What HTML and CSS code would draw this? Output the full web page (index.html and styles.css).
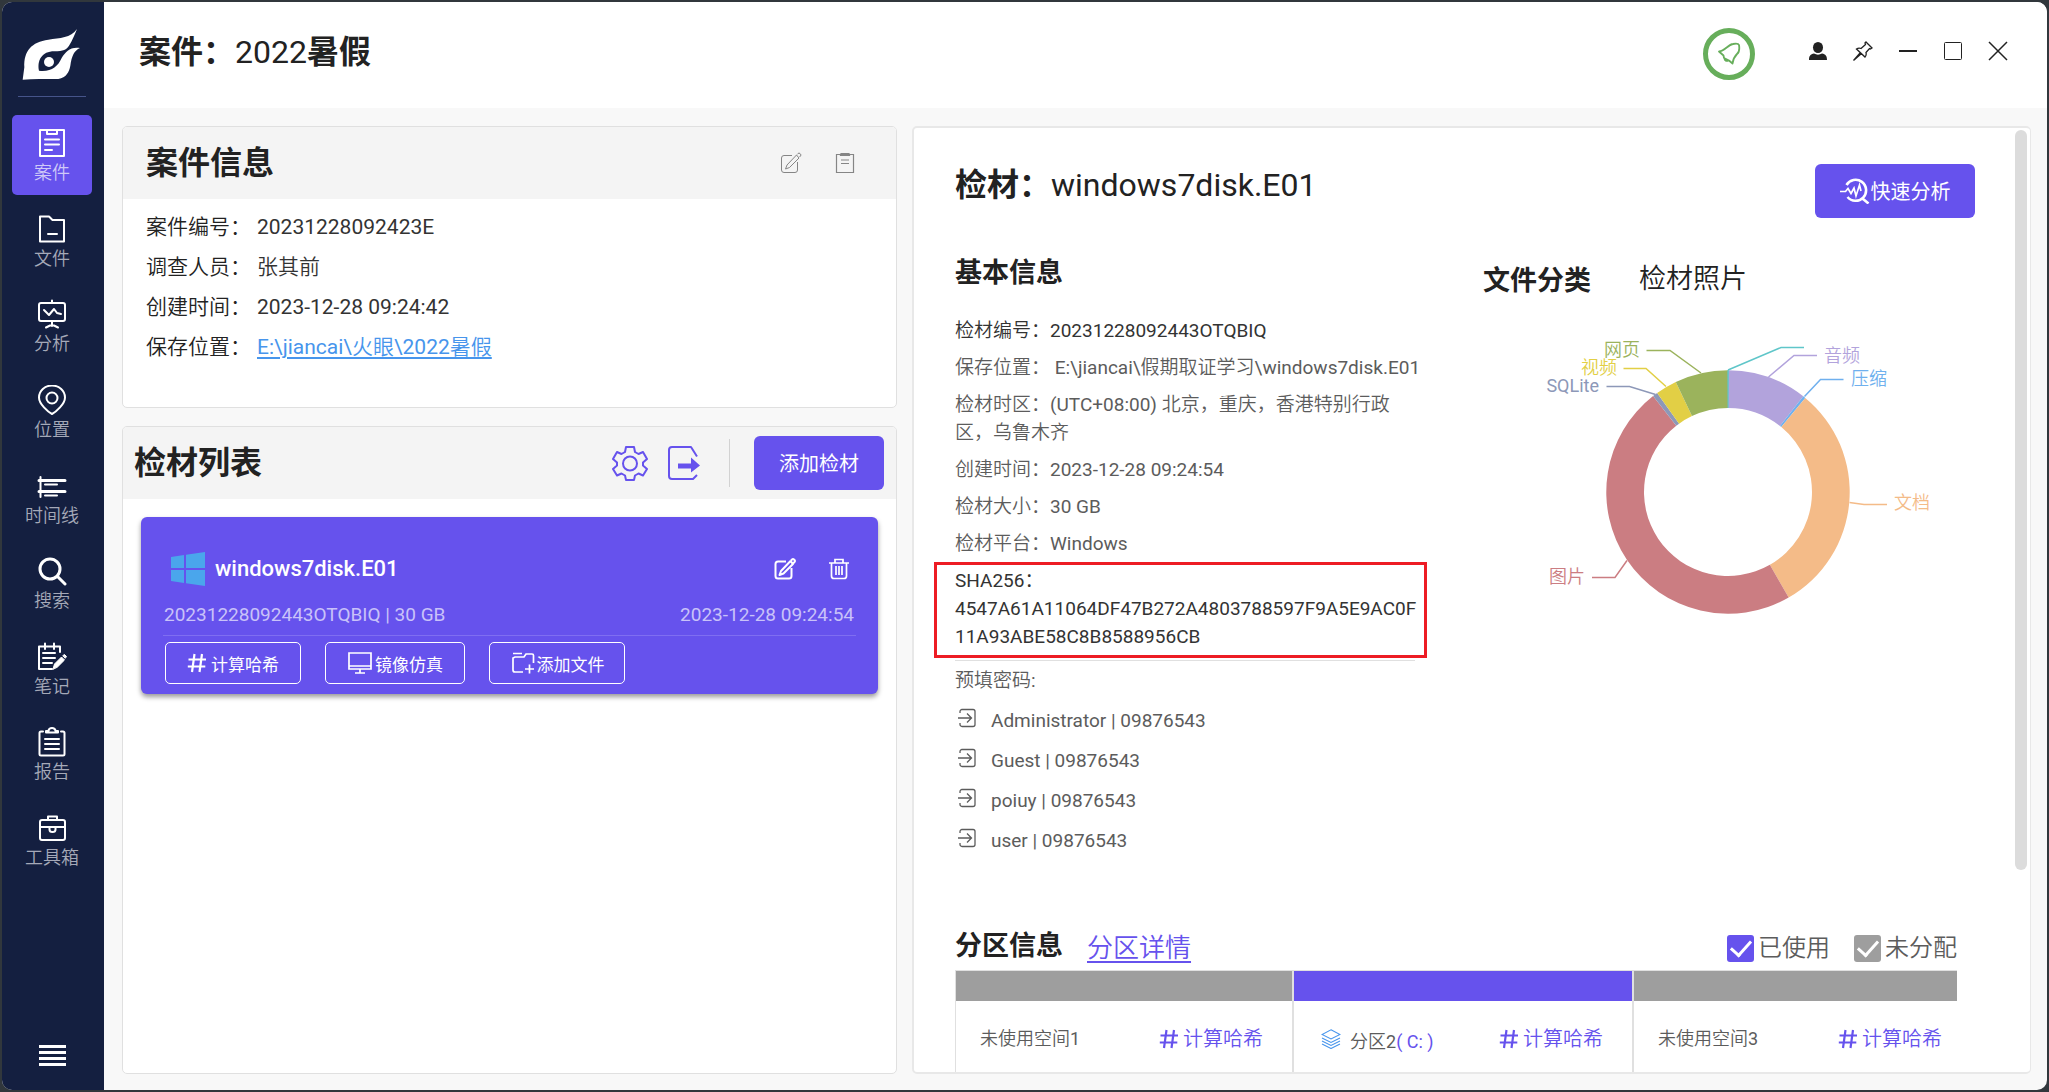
FILE: index.html
```html
<!DOCTYPE html>
<html lang="zh-CN">
<head>
<meta charset="utf-8">
<title>案件：2022暑假</title>
<link rel="stylesheet" href="styles.css">
</head>
<body>
<svg class="sprite" aria-hidden="true">
  <symbol id="i-hash" viewBox="0 0 20 20"><path d="M7.500 1 5 19M15 1l-2.500 18M1.500 6.500h17.500M.8 13.500h17.500" fill="none" stroke="currentColor" stroke-width="2.200"/></symbol>
  <symbol id="i-enter" viewBox="0 0 18 20"><path d="M2 5V3.500A2 2 0 0 1 4 1.500h11a2 2 0 0 1 2 2v13a2 2 0 0 1-2 2H4a2 2 0 0 1-2-2V15M0 10h13M9 5.500l4.500 4.500L9 14.500" fill="none" stroke="currentColor" stroke-width="1.300"/></symbol>
  <symbol id="i-edit" viewBox="0 0 22 22"><path d="M12 3.500H4A2.500 2.500 0 0 0 1.500 6v12A2.500 2.500 0 0 0 4 20.500h11a2.500 2.500 0 0 0 2.500-2.500v-8M16.500 3 7 13l-1.500 4 4-1.500L19 6zM17 2.500l1-1a1.500 1.500 0 0 1 2 0l.5.5a1.500 1.500 0 0 1 0 2l-1 1" fill="none" stroke="currentColor" stroke-linejoin="round"/></symbol>
</svg>
<div class="window">
  <aside class="sidebar">
    <svg class="logo" viewBox="71 82 180 156"><path fill="#fff" d="M236 85C217 112 185 112 150 117 100 124 76 150 78 200L73 237C110 233 150 236 180 235 204 230 212 215 216 195 220 165 228 150 245 142 215 138 203 152 190 172 178 199 158 214 122 210 116 180 130 152 168 152 195 152 205 146 212 135 222 120 230 100 236 85Z"/><circle cx="152" cy="184" r="15" fill="#fff"/></svg>
    <hr class="side-rule">
    <nav class="nav">
      <a class="nav-item active" href="#"><svg viewBox="0 0 30 30"><path d="M3 2h24v26H3zM10 2v4h10V2M8 11.500h14M8 16.500h14M8 22h7"/></svg><span>案件</span></a>
      <a class="nav-item" href="#"><svg viewBox="0 0 30 30"><path d="M3 2.500h9l3.500 3.500H27v21.500H3zM11 20h9"/></svg><span>文件</span></a>
      <a class="nav-item" href="#"><svg viewBox="0 0 30 30"><rect x="2" y="4" width="26" height="18" rx="2"/><path d="M15 1.500V4M15 22v5M9 28.500l4-2h4l4 2M7 11l5 5 5-6 3 4 4 1"/></svg><span>分析</span></a>
      <a class="nav-item" href="#"><svg viewBox="0 0 30 30"><path d="M15 29C11 27 2 19 2 12.500a13 12 0 0 1 26 0C28 19 19 27 15 29z"/><circle cx="15" cy="13" r="5.500"/></svg><span>位置</span></a>
      <a class="nav-item" href="#"><svg viewBox="0 0 30 30"><path d="M3.500 6v20M8 13.500h12M8 24.500h12"/><path d="M2 9.500h26M2 20.500h26" stroke-width="3"/></svg><span>时间线</span></a>
      <a class="nav-item" href="#"><svg viewBox="0 0 30 30"><circle cx="13" cy="13" r="10" stroke-width="3"/><path d="M20.500 20.500 28 28" stroke-width="3"/></svg><span>搜索</span></a>
      <a class="nav-item" href="#"><svg viewBox="0 0 30 30"><path d="M23 10V4.500H2V27h13M8 1.500V7M17 1.500V7M6 11h12M6 16h12M6 21h9"/><path d="m16 27 1.500-5 7-7 3 3-7 7zM26 13.500l1.500-1 2 2-1 1.500z" fill="#fff" stroke-width="1"/></svg><span>笔记</span></a>
      <a class="nav-item" href="#"><svg viewBox="0 0 30 30"><path d="M6 4.500H4a1.500 1.500 0 0 0-1.500 1.500v21A1.500 1.500 0 0 0 4 28.500h22a1.500 1.500 0 0 0 1.500-1.500V6A1.500 1.500 0 0 0 26 4.500h-2M9 5.500V4h2.500a3.500 3 0 0 1 7 0H21v1.500zM8 12h14M8 17h14M8 22h14"/></svg><span>报告</span></a>
      <a class="nav-item" href="#"><svg viewBox="0 0 30 30"><rect x="3" y="7" width="25" height="20" rx="2"/><path d="M11 7V3.500h9V7M3 14h9M19 14h9M12.500 14v2.500a3 2.500 0 0 0 6 0V14z"/></svg><span>工具箱</span></a>
    </nav>
    <button class="menu" type="button" aria-label="菜单"><i></i><i></i><i></i><i></i></button>
  </aside>

  <div class="body">
    <header class="topbar">
      <h1 class="title-xl">案件：<span class="latin">2022</span>暑假</h1>
      <button class="bell" type="button" aria-label="通知"><svg viewBox="0 0 24 24"><path d="M2 9.500C8 9 11 2.500 16 2c3-.5 5.500-.5 6 1 .5 3 .5 7-2 9-3 3-4 6-4.500 9.500L12 18.500 7 16l-.5-2.500zM7.500 16.500c0 2 2 3 4 2" fill="none" stroke="currentColor" stroke-width="1.800" stroke-linejoin="round"/></svg></button>
      <div class="win-tools">
        <button type="button" aria-label="用户"><svg viewBox="0 0 20 20"><ellipse cx="10" cy="6.500" rx="5" ry="5.500" fill="currentColor"/><path d="M1 19c0-4 1.500-6 5-6.500 2.500 1.500 5.500 1.500 8 0 3.500.5 5 2.500 5 6.500z" fill="currentColor"/></svg></button>
        <button type="button" aria-label="置顶"><svg viewBox="0 0 20 20"><path d="M13 1l6 6-1.500 1-1-.5-3.500 4c.5 2 0 3.500-1 4.500L3.500 8C5 7 6.500 7 8 7.500l4.500-4-.5-1.500zM7.500 11.500.5 19.500l8-7" fill="none" stroke="currentColor" stroke-width="1.300"/></svg></button>
        <button type="button" aria-label="最小化"><svg viewBox="0 0 20 20"><path d="M1 10h18" stroke="currentColor" stroke-width="2"/></svg></button>
        <button type="button" aria-label="最大化"><svg viewBox="0 0 20 20"><rect x="1.500" y="1.500" width="17" height="17" rx="1" fill="none" stroke="currentColor"/></svg></button>
        <button type="button" aria-label="关闭"><svg viewBox="0 0 20 20"><path d="M1 1l18 18M19 1 1 19" stroke="currentColor" stroke-width="1.500"/></svg></button>
      </div>
    </header>

    <main class="content">
      <div class="left">
        <section class="panel case">
          <div class="panel-head">
            <h2 class="title-xl">案件信息</h2>
            <div class="head-icons">
              <button type="button" aria-label="编辑"><svg viewBox="0 0 22 22"><use href="#i-edit"/></svg></button>
              <button type="button" aria-label="详情"><svg viewBox="0 0 22 22"><path d="M2.500 2.500h17v18h-17zM7 1.500h8l.5 2h-9zM7 8h8M7 11.500h8" fill="none" stroke="currentColor" stroke-width="1.200"/></svg></button>
            </div>
          </div>
          <dl class="case-list">
            <div><dt>案件编号：</dt><dd>20231228092423E</dd></div>
            <div><dt>调查人员：</dt><dd>张其前</dd></div>
            <div><dt>创建时间：</dt><dd>2023-12-28 09:24:42</dd></div>
            <div><dt>保存位置：</dt><dd><a href="#">E:\jiancai\火眼\2022暑假</a></dd></div>
          </dl>
        </section>

        <section class="panel evidence">
          <div class="panel-head">
            <h2 class="title-xl">检材列表</h2>
            <div class="head-actions">
              <button class="tool" type="button" aria-label="设置"><svg viewBox="0 0 36 36"><path d="M14 2h8l1 5 3.500 2 4.500-2 4 7-4 3.500v3l4 3.500-4 6.500-4.500-2-3.500 2-1 4.500h-8l-1-4.500-3.500-2-4.500 2L1 24l4-3.500v-3L1 14l4-7 4.500 2L13 7z"/><circle cx="18" cy="18.500" r="7"/></svg></button>
              <button class="tool" type="button" aria-label="导出"><svg viewBox="0 0 36 36"><path d="M31 11.500 25 2H6a3 3 0 0 0-3 3v26a3 3 0 0 0 3 3h21l4-4"/><path d="M12 18.500h13v-6l9 8-9 7v-4H12z" fill="currentColor" stroke="none"/></svg></button>
              <span class="bar"></span>
              <button class="btn" type="button">添加检材</button>
            </div>
          </div>
          <article class="disk">
            <div class="disk-top">
              <svg class="win-logo" viewBox="0 0 34 34"><path fill="#4aa6ec" d="M0 5 13 3v13H0zM15 2.700 34 0v16H15zM0 18h13v13L0 29zM15 18h19v16l-19-2.700z"/></svg>
              <h3>windows7disk.E01</h3>
              <button type="button" aria-label="编辑"><svg viewBox="0 0 22 22" class="bold"><use href="#i-edit"/></svg></button>
              <button type="button" aria-label="删除"><svg viewBox="0 0 22 22"><path d="M1 5h20M7 5V1.500h8V5M3.500 5v13a2.500 2.500 0 0 0 2.500 2.500h10a2.500 2.500 0 0 0 2.500-2.500V5M8 8v9M11 8v9M14 8v9" fill="none" stroke="currentColor" stroke-width="1.700"/></svg></button>
            </div>
            <div class="disk-meta"><span>20231228092443OTQBIQ | 30 GB</span><time>2023-12-28 09:24:54</time></div>
            <div class="disk-actions">
              <button type="button"><svg class="hash" viewBox="0 0 20 20"><use href="#i-hash"/></svg>计算哈希</button>
              <button class="wide" type="button"><svg viewBox="0 0 26 24"><path d="M2 2h22v16H2zM2 15h22M13 18v4M8 22h10" fill="none" stroke="currentColor" stroke-width="1.700"/></svg>镜像仿真</button>
              <button class="tight" type="button"><svg viewBox="0 0 26 24"><path d="M13 21H5a2 2 0 0 1-2-2V7l2-1h9l2-3h6a1.500 1.500 0 0 1 1.500 1.500V12M3 2.500h9M19.500 13.500v9M15 18h9" fill="none" stroke="currentColor" stroke-width="1.700"/></svg>添加文件</button>
            </div>
          </article>
        </section>
      </div>

      <section class="detail">
        <div class="detail-scroll">
          <div class="detail-head">
            <h2 class="title-xl">检材：<span class="latin">windows7disk.E01</span></h2>
            <button class="btn quick" type="button"><svg viewBox="0 0 30 26"><path d="M6.500 7a10.500 10.500 0 1 1 1 12M22.500 20.500l6 5" fill="none" stroke="currentColor" stroke-width="2.600"/><path d="M0 13.500h5.500l2.500-3 3 5 3-5.500 2 8 3.500-11 1.500 6" fill="none" stroke="currentColor" stroke-width="1.700"/></svg>快速分析</button>
          </div>
          <div class="detail-cols">
            <div class="basic">
              <h3 class="title-md">基本信息</h3>
              <ul class="facts">
                <li class="strong">检材编号：20231228092443OTQBIQ</li>
                <li>保存位置： E:\jiancai\假期取证学习\windows7disk.E01</li>
                <li class="wrap">检材时区：(UTC+08:00) 北京，重庆，香港特别行政区，乌鲁木齐</li>
                <li>创建时间：2023-12-28 09:24:54</li>
                <li>检材大小：30 GB</li>
                <li>检材平台：Windows</li>
                <li class="strong marked">SHA256：<br>4547A61A11064DF47B272A4803788597F9A5E9AC0F<br>11A93ABE58C8B8588956CB</li>
              </ul>
              <p class="pw-title">预填密码:</p>
              <ul class="pw-list">
                <li><svg viewBox="0 0 18 20"><use href="#i-enter"/></svg>Administrator | 09876543</li>
                <li><svg viewBox="0 0 18 20"><use href="#i-enter"/></svg>Guest | 09876543</li>
                <li><svg viewBox="0 0 18 20"><use href="#i-enter"/></svg>poiuy | 09876543</li>
                <li><svg viewBox="0 0 18 20"><use href="#i-enter"/></svg>user | 09876543</li>
              </ul>
            </div>
            <div class="charts">
              <div class="tabs"><button class="on" type="button">文件分类</button><button type="button">检材照片</button></div>
              <svg class="donut" viewBox="-245 -163 492 300">
                <g id="rings"></g>
                <g fill="none" stroke-width="1.500">
                  <path stroke="#5fc6c9" d="M0-122 53-144.500H76"/>
                  <path stroke="#b2a3dc" d="M40.500-115 66-136.500H89"/>
                  <path stroke="#6fb0ee" d="M76.500-95.500 92.500-112.500H115.500"/>
                  <path stroke="#f4bb88" d="M121.500 10.500 136 12.500H159"/>
                  <path stroke="#cb7d82" d="M-101 68.500-113 85.500H-136"/>
                  <path stroke="#8d98b8" d="M-72.500-97.500-98.500-105.500H-121.500"/>
                  <path stroke="#e2cf45" d="M-62-105.500-82-123.500H-104.500"/>
                  <path stroke="#9bb35c" d="M-27-119-58-141.500H-81.500"/>
                </g>
                <text x="96" y="-130" fill="#b2a3dc">音频</text>
                <text x="123" y="-107" fill="#6fb0ee">压缩</text>
                <text x="166" y="17" fill="#f4bb88">文档</text>
                <text x="-143" y="91" text-anchor="end" fill="#cb7d82">图片</text>
                <text x="-129" y="-100" text-anchor="end" fill="#8d98b8">SQLite</text>
                <text x="-111" y="-118" text-anchor="end" fill="#e2cf45">视频</text>
                <text x="-88" y="-136" text-anchor="end" fill="#9bb35c">网页</text>
              </svg>
            </div>
          </div>
          <div class="part-head">
            <h3 class="title-md">分区信息</h3>
            <a href="#">分区详情</a>
            <div class="legend">
              <label><input type="checkbox" checked>已使用</label>
              <label><input class="gray" type="checkbox" checked>未分配</label>
            </div>
          </div>
          <div class="parts">
            <div class="part"><div class="fill gray"></div><div class="part-row"><span>未使用空间1</span><button type="button"><svg viewBox="0 0 20 20"><use href="#i-hash"/></svg>计算哈希</button></div></div>
            <div class="part"><div class="fill"></div><div class="part-row"><svg class="layers" viewBox="0 0 20 20"><path d="M10 .8 19 5.500 10 10 1 5.500zM1 9l9 4.500L19 9M1 12l9 4.500 9-4.500M1 15l9 4.500 9-4.500" fill="none" stroke="currentColor" stroke-width="1.100"/></svg><span class="low">分区2<b>( C: )</b></span><button type="button"><svg viewBox="0 0 20 20"><use href="#i-hash"/></svg>计算哈希</button></div></div>
            <div class="part"><div class="fill gray"></div><div class="part-row last"><span>未使用空间3</span><button type="button"><svg viewBox="0 0 20 20"><use href="#i-hash"/></svg>计算哈希</button></div></div>
          </div>
        </div>
        <div class="track"><div class="thumb"></div></div>
      </section>
    </main>
  </div>
</div>
<script src="chart.js"></script>
</body>
</html>
```
FILE: chart.js
```js
// Slices of the file type ring: start angle, end angle (degrees clockwise from the top), colour.
const slices = [
  [0, 38.2, '#b2a3dc'],
  [38.2, 39.4, '#6fb0ee'],
  [39.4, 150.1, '#f4bb88'],
  [150.1, 322, '#cb7d82'],
  [322, 324.4, '#8d98b8'],
  [324.4, 334.6, '#e2cf45'],
  [334.6, 360, '#9bb35c'],
  [359.7, 360.4, '#5fc6c9']
];
const OUTER = 121.7, INNER = 84;
const at = (r, deg) => {
  const a = deg * Math.PI / 180;
  return (r * Math.sin(a)).toFixed(2) + ' ' + (-r * Math.cos(a)).toFixed(2);
};
const rings = document.getElementById('rings');
for (const [from, to, color] of slices) {
  const big = to - from > 180 ? 1 : 0;
  const p = document.createElementNS('http://www.w3.org/2000/svg', 'path');
  p.setAttribute('d', `M${at(OUTER, from)}A${OUTER} ${OUTER} 0 ${big} 1 ${at(OUTER, to)}L${at(INNER, to)}A${INNER} ${INNER} 0 ${big} 0 ${at(INNER, from)}Z`);
  p.setAttribute('fill', color);
  rings.appendChild(p);
}
```
FILE: styles.css
```css
:root {
  --accent: #6652ed;
  --ink: #222;
  --soft: #5c5c5c;
  --line: #e0e0e0;
}
* { box-sizing: border-box; margin: 0; padding: 0; }
html, body { height: 100%; }
body {
  background: #31373c;
  padding: 2px;
  font-family: Roboto, "Noto Sans CJK SC DemiLight", "Noto Sans CJK SC Light", "Noto Sans CJK SC", sans-serif;
  font-size: 18px;
  line-height: 28px;
  color: var(--ink);
}
button { font: inherit; color: inherit; background: none; border: 0; }
ul { list-style: none; }
svg { display: block; flex: none; }
.sprite { position: absolute; width: 0; height: 0; }

.window { display: flex; height: 100%; border-radius: 10px; overflow: hidden; background: #f8f8f8; }

.sidebar {
  flex: none; width: 102px; background: #141f40;
  display: flex; flex-direction: column; align-items: center; padding: 26px 2px 0 0;
}
.logo { width: 60px; height: 52px; }
.side-rule { width: 68px; border: 0; border-top: 1px solid #46548a; margin: 16px 0 18px; }
.nav { height: 765px; display: flex; flex-direction: column; justify-content: space-between; }
.nav-item {
  width: 80px; height: 80px; padding-top: 13px; border-radius: 5px;
  display: flex; flex-direction: column; align-items: center; gap: 3px;
  color: #a5a9b8; text-decoration: none; line-height: 24px;
}
.nav-item svg { width: 30px; height: 30px; fill: none; stroke: #fff; stroke-width: 2; stroke-linejoin: round; stroke-linecap: round; }
.nav-item.active { background: var(--accent); color: #cfc9f8; }
.menu { margin: auto 0 24px; width: 27px; display: grid; gap: 3px; }
.menu i { height: 3px; background: #fff; }

.body { flex: 1; min-width: 0; display: flex; flex-direction: column; }
.topbar { flex: none; height: 106px; background: #fff; padding: 26px 27px 0 35px; display: flex; align-items: flex-start; }
.title-xl { font-family: Roboto, "Noto Sans CJK SC", sans-serif; font-size: 32px; line-height: 48px; font-weight: 700; }
.title-md { font-family: Roboto, "Noto Sans CJK SC", sans-serif; font-size: 27px; line-height: 34px; font-weight: 700; }
.latin { font-weight: 400; }
.bell {
  width: 52px; height: 52px; margin: 0 40px 0 auto; border: 5px solid #67ae5b; border-radius: 50%;
  color: #67ae5b; display: grid; place-items: center;
}
.bell svg { width: 24px; height: 24px; }
.win-tools { display: flex; }
.win-tools button { width: 45px; height: 46px; display: grid; place-items: center; }
.win-tools svg { width: 20px; height: 20px; }

.content { flex: 1; min-height: 0; display: grid; grid-template-columns: 775fr 1119fr; gap: 15px; padding: 18px 16px 16px 18px; }
.left { display: flex; flex-direction: column; gap: 18px; min-width: 0; min-height: 0; }
.panel { background: #fff; border: 1px solid var(--line); border-radius: 5px; overflow: hidden; }
.panel-head { height: 72px; background: #f4f4f4; display: flex; align-items: center; justify-content: space-between; }
.case .panel-head { padding: 0 40px 0 23px; }
.evidence { flex: 1; }
.evidence .panel-head { padding: 0 12px 0 11px; }
.head-icons { display: flex; gap: 32px; color: #858585; }
.head-icons svg { width: 22px; height: 22px; }
.case-list { padding: 8px 23px 40px; font-size: 21px; line-height: 40px; }
.case-list div { display: flex; gap: 6px; }
.case-list dd { color: #333; }
.case-list a { color: #4795ec; text-decoration-thickness: 2px; text-underline-offset: 3px; }

.head-actions { display: flex; align-items: center; }
.tool { color: var(--accent); margin-right: 18px; }
.tool svg { width: 36px; height: 36px; fill: none; stroke: currentColor; stroke-width: 2; stroke-linejoin: round; }
.bar { width: 1px; height: 48px; background: #d2d2d2; margin: 0 24px 0 9px; }
.btn { height: 54px; width: 130px; border-radius: 6px; background: var(--accent); color: #fff; font-size: 20px; font-family: "Noto Sans CJK SC", sans-serif; }

.disk { margin: 18px; height: 177px; background: var(--accent); color: #fff; border-radius: 6px; box-shadow: 0 3px 5px rgba(0, 0, 0, .4); padding: 34px 22px 0; }
.disk-top { display: flex; align-items: center; height: 36px; padding: 0 6px 0 8px; }
.win-logo { width: 34px; height: 34px; margin-right: 10px; }
.disk-top h3 { font-size: 22px; font-weight: 500; margin-right: auto; }
.disk-top button { margin-left: 32px; }
.disk-top button svg { width: 22px; height: 22px; }
.bold { stroke-width: 2; }
.disk-meta { display: flex; justify-content: space-between; padding: 14px 2px 6px 1px; color: #c9c2f9; font-size: 19px; font-weight: 400; border-bottom: 1px solid #7f6ef1; }
.disk-actions { display: flex; gap: 24px; padding: 6px 2px; }
.disk-actions button {
  height: 42px; width: 136px; border: 1px solid #fff; border-radius: 5px; font: 400 17px "Noto Sans CJK SC", sans-serif;
  display: flex; align-items: center; justify-content: center; gap: 4px;
}
.disk-actions .tight { gap: 1px; }
.disk-actions .wide { gap: 2px; width: 140px; }
.disk-actions svg { width: 26px; height: 24px; }
.disk-actions .hash { width: 20px; height: 20px; }

.detail { background: #fff; border: 2px solid #e8e8e8; border-right-width: 1px; border-radius: 5px; display: flex; overflow: hidden; min-height: 0; }
.detail-scroll { flex: 1; min-width: 0; overflow: hidden; padding: 36px 0 0 41px; }
.track { flex: none; width: 18px; padding: 2px 3px; }
.thumb { height: 740px; border-radius: 9px; background: #dcdcdc; }
.detail-head { display: flex; justify-content: space-between; align-items: flex-start; padding-right: 37px; }
.detail-head .title-xl { line-height: 42px; }
.quick { width: 160px; display: flex; align-items: center; justify-content: center; gap: 1px; }
.quick svg { width: 30px; height: 26px; }
.detail-cols { display: flex; gap: 68px; padding: 38px 37px 0 0; }
.basic { flex: none; width: 460px; color: var(--soft); font-size: 19px; }
.basic .title-md { color: var(--ink); }
.facts { margin-top: 27px; border-bottom: 1px solid var(--line); }
.facts li { margin-bottom: 9px; white-space: nowrap; }
.facts .wrap { white-space: normal; padding-right: 20px; }
.facts .strong { color: #333; }
.marked { position: relative; }
.marked::after { content: ""; position: absolute; inset: -5px -12px -7px -21px; border: 3px solid #ed1c24; }
.pw-title { margin: 6px 0; }
.pw-list li { display: flex; align-items: center; height: 40px; gap: 15px; padding-left: 3px; }
.pw-list svg { width: 18px; height: 20px; margin-bottom: 7px; }
.charts { flex: 1; min-width: 0; padding-top: 7px; }
.tabs { display: flex; gap: 48px; font-size: 27px; line-height: 32px; }
.tabs .on { font-family: "Noto Sans CJK SC", sans-serif; font-weight: 700; }
.donut { width: 492px; height: 300px; margin-top: 34px; font-size: 18px; }

.part-head { display: flex; height: 41px; margin: 68px 55px 0 0; font-size: 26px; line-height: 38px; }
.part-head a { color: var(--accent); margin-left: 24px; text-decoration-thickness: 2px; text-underline-offset: 4px; }
.legend { margin-left: auto; display: flex; gap: 24px; font-size: 24px; color: var(--soft); }
.legend label { display: flex; align-items: center; gap: 4px; height: 38px; }
.legend input { appearance: none; width: 27px; height: 27px; border-radius: 3px; background: var(--accent); display: grid; place-items: center; }
.legend input::after { content: ""; width: 9px; height: 17px; border: solid #fff; border-width: 0 3px 3px 0; transform: rotate(42deg); margin-bottom: 5px; }
.legend .gray, .fill.gray { background: #9e9e9e; }
.parts { display: grid; grid-template-columns: 336fr 340fr 325fr; margin-right: 55px; border-top: 1px solid var(--line); border-left: 1px solid var(--line); }
.part + .part { border-left: 2px solid var(--line); }
.fill { height: 30px; background: var(--accent); }
.part-row { display: flex; align-items: center; height: 76px; padding: 0 29px 0 24px; color: var(--soft); }
.part-row.last { padding-right: 15px; }
.part-row b { font-weight: 400; color: var(--accent); }
.part-row button { margin-left: auto; display: flex; align-items: center; gap: 4px; color: var(--accent); font-size: 20px; }
.part-row button svg, .layers { width: 20px; height: 20px; }
.layers { color: #4795ec; margin: 0 9px 0 3px; }
.low { padding-top: 5px; }
```
